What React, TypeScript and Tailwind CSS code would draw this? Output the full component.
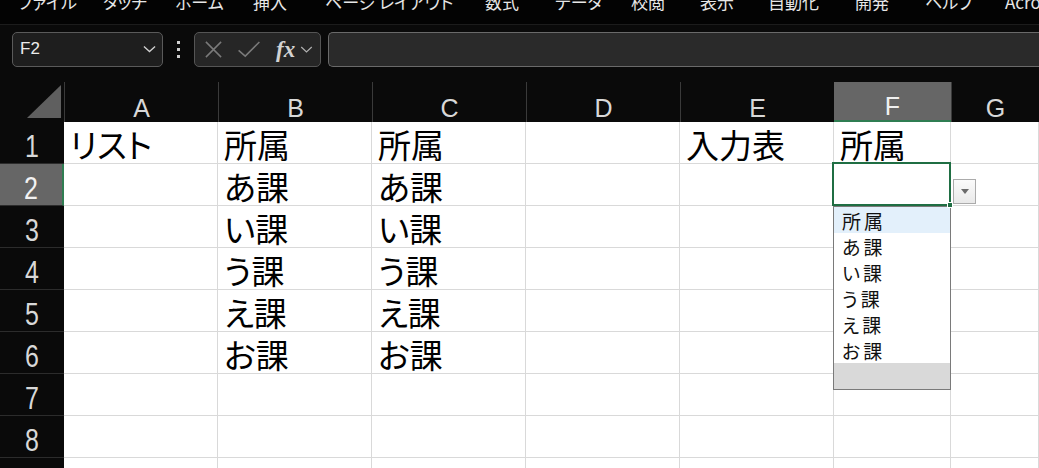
import React from "react";

const menu: [string, number][] = [
  ["ファイル", 85],
  ["タッチ", 72],
  ["ホーム", 78],
  ["挿入", 72],
  ["ページ レイアウト", 160],
  ["数式", 70],
  ["データ", 76],
  ["校閲", 69],
  ["表示", 68],
  ["自動化", 87],
  ["開発", 70],
  ["ヘルプ", 80],
  ["Acrobat", 120],
];

const cols = ["A", "B", "C", "D", "E", "F", "G"];

// cell contents keyed by row, indexed by column
const data: Record<number, string[]> = {
  1: ["リスト", "所属", "所属", "", "入力表", "所属", ""],
  2: ["", "あ課", "あ課", "", "", "", ""],
  3: ["", "い課", "い課", "", "", "", ""],
  4: ["", "う課", "う課", "", "", "", ""],
  5: ["", "え課", "え課", "", "", "", ""],
  6: ["", "お課", "お課", "", "", "", ""],
  7: ["", "", "", "", "", "", ""],
  8: ["", "", "", "", "", "", ""],
  9: ["", "", "", "", "", "", ""],
};

const options = ["所属", "あ課", "い課", "う課", "え課", "お課"];

const jp = "font-['Noto_Sans_CJK_JP',sans-serif] [font-feature-settings:'palt']";

function Chevron({ className }: { className?: string }) {
  return (
    <svg viewBox="0 0 14 8" className={className} fill="none" stroke="currentColor" strokeWidth="1.4">
      <path d="M1 1.2 L7 6.8 L13 1.2" />
    </svg>
  );
}

function DropList() {
  return (
    <div className="absolute left-[-1px] top-[42px] z-20 w-[118px] border border-[#7a7a7a] bg-white">
      {options.map((o, i) => (
        <div
          key={o}
          className={`flex h-[26px] items-center pl-[8px] font-['Noto_Sans_CJK_JP',sans-serif] text-[19px] leading-none tracking-[3px] text-[#111] ${
            i === 0 ? "bg-[#e3f0fb]" : ""
          }`}
        >
          {o}
        </div>
      ))}
      <div className="h-[26px] bg-[#d9d9d9]" />
    </div>
  );
}

function ActiveCell() {
  return (
    <>
      <div className="pointer-events-none absolute left-[-2px] top-[-2px] z-10 h-[44px] w-[119px] border-2 border-[#1f6e43]" />
      <div className="absolute left-[113px] top-[38px] z-30 h-[6px] w-[6px] border border-white bg-[#1f6e43]" />
      <div className="absolute left-[119px] top-[15px] z-20 flex h-[25px] w-[23px] items-center justify-center border border-[#ababab] bg-gradient-to-b from-[#fbfbfb] to-[#e9e9e9]">
        <svg viewBox="0 0 8 5" className="h-[5px] w-[8px]">
          <path d="M0 0 H8 L4 5 Z" fill="#6b6b6b" />
        </svg>
      </div>
      <DropList />
    </>
  );
}

export default function App() {
  return (
    <div className="h-[468px] w-[1039px] overflow-hidden bg-[#0a0a0a] font-['Liberation_Sans',sans-serif]">
      {/* ribbon tabs */}
      <div className="h-[25px] overflow-hidden border-b border-[#1c1c1c] bg-[#030303]">
        <div className={`mt-[-10px] flex pl-[18px] text-[17px] leading-[24px] whitespace-nowrap text-[#e6e6e6] ${jp}`}>
          {menu.map(([t, w]) => (
            <div key={t} className="shrink-0" style={{ width: w }}>
              {t}
            </div>
          ))}
        </div>
      </div>

      {/* formula bar */}
      <div className="flex h-[47px] items-center bg-[#0a0a0a] pt-[1px]">
        <div className="ml-[12px] flex h-[35px] w-[151px] items-center justify-between rounded-[5px] border border-[#5a5a5a] bg-[#1e1e1e] pl-[7px] pr-[6px]">
          <span className="text-[17px] text-[#ececec]">F2</span>
          <Chevron className="h-[8px] w-[13px] text-[#d0d0d0]" />
        </div>
        <div className="flex w-[31px] flex-col items-center gap-[4px]">
          <span className="h-[3px] w-[3px] bg-[#cfcfcf]" />
          <span className="h-[3px] w-[3px] bg-[#cfcfcf]" />
          <span className="h-[3px] w-[3px] bg-[#cfcfcf]" />
        </div>
        <div className="flex h-[35px] w-[127px] items-center rounded-[5px] border border-[#555] bg-[#262626] pl-[9px]">
          <svg viewBox="0 0 20 20" className="h-[19px] w-[19px]" stroke="#7a7a7a" strokeWidth="1.6">
            <path d="M2 2 L18 18 M18 2 L2 18" />
          </svg>
          <svg viewBox="0 0 24 18" className="ml-[14px] h-[17px] w-[24px]" fill="none" stroke="#7a7a7a" strokeWidth="1.6">
            <path d="M1 10 L8 16 L23 1" />
          </svg>
          <span className="ml-[15px] font-['Liberation_Serif',serif] text-[23px] font-bold italic leading-none text-[#d2d2d2]">
            fx
          </span>
          <Chevron className="ml-[5px] h-[7px] w-[13px] text-[#b0b0b0]" />
        </div>
        <div className="ml-[7px] h-[35px] flex-1 rounded-l-[5px] border border-r-0 border-[#6a6a6a] bg-[#2a2a2a]" />
      </div>

      {/* worksheet */}
      <div className="mt-[10px] grid grid-cols-[64px_154px_154px_154px_154px_154px_117px_1fr] grid-rows-[40px_repeat(9,42px)]">
        {/* select-all corner */}
        <div className="relative bg-[#0a0a0a]">
          <svg viewBox="0 0 34 33" className="absolute bottom-[4px] right-[3px] h-[33px] w-[34px]">
            <path d="M34 0 V33 H0 Z" fill="#5f5f5f" />
          </svg>
        </div>
        {cols.map((c) => (
          <div
            key={c}
            className={`flex items-end justify-center pb-[1px] text-[25px] leading-none ${
              c === "F"
                ? "border-b-2 border-[#2f7d52] bg-[#666666] text-[#f0f0f0]"
                : "border-l border-[#3a3a3a] bg-[#0a0a0a] text-[#d8d8d8]"
            }`}
          >
            {c}
          </div>
        ))}

        {Object.entries(data).map(([r, cells]) => {
          const row = Number(r);
          return (
            <React.Fragment key={r}>
              <div
                className={`flex items-end justify-center overflow-hidden border-b border-[#2c2c2c] pb-[1px] text-[32px] leading-none ${
                  row === 2 ? "border-r-2 border-r-[#2f7d52] bg-[#666666] text-[#f2f2f2]" : "bg-[#0a0a0a] text-[#d8d8d8]"
                }`}
              >
                <span className="inline-block scale-x-[0.78]">{row}</span>
              </div>
              {cells.map((v, ci) => (
                <div
                  key={ci}
                  className={`relative flex items-end whitespace-nowrap border-b border-r border-[#d9d9d9] bg-white pb-[2px] pl-[6px] text-[33px] leading-none text-black ${jp}`}
                >
                  {v}
                  {row === 2 && ci === 5 ? <ActiveCell /> : null}
                </div>
              ))}
            </React.Fragment>
          );
        })}
      </div>
    </div>
  );
}
